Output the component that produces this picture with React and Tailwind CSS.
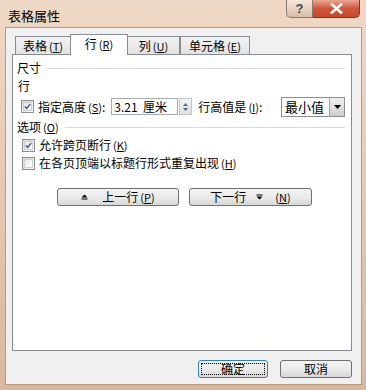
import React from 'react';

const cjk = { fontFamily: '"Noto Sans CJK SC", "Liberation Sans", sans-serif' };

const Key = ({ k }) => (
  <span className="ml-[2px] text-[11px]">
    (<span className="underline underline-offset-1">{k}</span>)
  </span>
);

const CheckBox = ({ checked }) => (
  <div className="w-[13px] h-[13px] border border-[#8e8f8f] bg-gradient-to-br from-[#dcdcdc] to-[#fbfbfb] p-[1px] flex items-center justify-center">
    <div className="w-full h-full border border-[#cfcfcf] bg-gradient-to-br from-[#e8e8e8] to-white flex items-center justify-center">
      {checked && (
        <svg width="9" height="9" viewBox="0 0 9 9">
          <path d="M1 4.5 L3.5 7 L8 1.5" stroke="#3a4f8f" strokeWidth="1.8" fill="none" />
        </svg>
      )}
    </div>
  </div>
);

const Tab = ({ label, k, active, w }) => (
  <div
    className={
      active
        ? 'relative z-10 -mb-px h-[21px] bg-white border border-b-0 border-[#898c95] flex items-center justify-center -mx-px'
        : 'h-[18px] bg-gradient-to-b from-[#f3f3f3] to-[#e2e2e2] border border-b-0 border-[#898c95] flex items-center justify-center'
    }
    style={{ width: w }}
  >
    <span className={active ? 'text-[12px] text-black pb-[2px]' : 'text-[12px] text-black'}>
      {label}
      <Key k={k} />
    </span>
  </div>
);

const Btn = ({ children, w, primary }) => (
  <div
    className={
      'h-[18px] rounded-[3px] border bg-gradient-to-b from-[#f2f2f2] via-[#ebebeb] to-[#d8d8d8] flex items-center justify-center p-[2px] ' +
      (primary ? 'border-[#3c7fb1]' : 'border-[#707070]')
    }
    style={{ width: w }}
  >
    <div
      className={
        'w-full h-full flex items-center justify-center text-[12px] ' +
        (primary ? 'border border-dotted border-black' : '')
      }
    >
      {children}
    </div>
  </div>
);

const UpMark = () => (
  <svg width="7" height="6" viewBox="0 0 7 6" className="mr-[14px]">
    <path d="M0.5 3.5 L3.5 0.5 L6.5 3.5Z" fill="#000" />
    <rect x="0.5" y="4.5" width="6" height="1" fill="#000" />
  </svg>
);

const DownMark = () => (
  <svg width="7" height="6" viewBox="0 0 7 6" className="mx-[10px]">
    <rect x="0.5" y="0.5" width="6" height="1" fill="#000" />
    <path d="M0.5 2.5 L3.5 5.5 L6.5 2.5Z" fill="#000" />
  </svg>
);

export default function App() {
  return (
    <div
      className="w-[366px] h-[390px] flex flex-col bg-gradient-to-b from-[#f0d8c6] via-[#e6c8b0] to-[#d9b99e] text-black"
      style={cjk}
    >
      {/* title bar */}
      <div className="h-[27px] flex items-start pl-[8px] pr-[6px]">
        <div className="pt-[6px] text-[13px] text-black">表格属性</div>
        <div className="ml-auto flex">
          <div className="w-[27px] h-[18px] rounded-bl-[5px] border border-t-0 border-[#8a7a6e] bg-gradient-to-b from-[#f6e6da] via-[#e9d3c3] to-[#d6bba6] flex items-center justify-center text-[13px] text-[#4a4a4a] font-bold" style={{ fontFamily: '"Liberation Sans", sans-serif' }}>
            ?
          </div>
          <div className="w-[47px] h-[18px] rounded-br-[5px] border border-t-0 border-l-0 border-[#7a3a2a] bg-gradient-to-b from-[#e9a592] via-[#d0553c] to-[#c24a2c] flex items-center justify-center">
            <svg width="13" height="11" viewBox="0 0 13 11">
              <path d="M2 1.5 L11 9.5 M11 1.5 L2 9.5" stroke="#fff" strokeWidth="2.6" strokeLinecap="square" />
            </svg>
          </div>
        </div>
      </div>

      {/* client area */}
      <div className="flex-1 mx-[5px] mb-[5px] mr-[4px] bg-[#f0f0f0] border border-[#b79c85] flex flex-col pl-[6px] pr-[9px] pt-[6px]">
        {/* tabs */}
        <div className="flex items-end pl-[3px]">
          <Tab label="表格" k="T" w={56} />
          <Tab label="行" k="R" active w={58} />
          <Tab label="列" k="U" w={53} />
          <Tab label="单元格" k="E" w={70} />
        </div>

        {/* panel */}
        <div className="h-[297px] bg-white border border-[#898c95] flex flex-col pl-[4px] pr-[6px] pt-[5px] text-[12px]">
          <div className="h-[16px] flex items-center gap-[6px]">
            <span>尺寸</span>
            <div className="flex-1 h-px bg-[#dcdcdc]" />
          </div>
          <div className="h-[16px] mt-[2px] flex items-center pl-[1px]">行</div>

          <div className="h-[21px] mt-[2px] flex items-center pl-[4px]">
            <CheckBox checked />
            <span className="ml-[4px]">
              指定高度<Key k="S" />:
            </span>
            <div className="ml-[6px] flex items-center">
              <div className="w-[67px] h-[17px] border border-[#a5acb5] flex items-center pl-[2px] text-[12px] whitespace-pre">
                3.21  厘米
              </div>
              <div className="w-[13px] h-[17px] ml-px border border-[#c2c7cd] bg-gradient-to-b from-[#f5f5f5] to-[#dedede] flex flex-col items-center justify-center gap-[2px]">
                <svg width="5" height="3" viewBox="0 0 5 3"><path d="M0 3 L2.5 0 L5 3Z" fill="#4f6c8f" /></svg>
                <svg width="5" height="3" viewBox="0 0 5 3"><path d="M0 0 L2.5 3 L5 0Z" fill="#4f6c8f" /></svg>
              </div>
            </div>
            <span className="ml-[6px]">
              行高值是<Key k="I" />:
            </span>
            <div className="ml-auto w-[64px] h-[20px] border border-[#8f8f8f] flex items-center">
              <span className="pl-[3px] flex-1 text-[13px]">最小值</span>
              <div className="w-[15px] h-[18px] border-l border-[#a0a0a0] bg-gradient-to-b from-[#f0f0f0] to-[#cfcfcf] flex items-center justify-center">
                <svg width="7" height="4" viewBox="0 0 7 4"><path d="M0 0 L7 0 L3.5 4Z" fill="#000" /></svg>
              </div>
            </div>
          </div>

          <div className="h-[16px] mt-[2px] flex items-center gap-[6px]">
            <span>
              选项<Key k="O" />
            </span>
            <div className="flex-1 h-px bg-[#dcdcdc]" />
          </div>

          <div className="h-[16px] mt-[2px] flex items-center pl-[5px]">
            <CheckBox checked />
            <span className="ml-[4px]">
              允许跨页断行<Key k="K" />
            </span>
          </div>
          <div className="h-[16px] mt-[2px] flex items-center pl-[5px]">
            <CheckBox />
            <span className="ml-[4px]">
              在各页顶端以标题行形式重复出现<Key k="H" />
            </span>
          </div>

          <div className="mt-[17px] flex pl-[40px] gap-[10px]">
            <Btn w={122}>
              <UpMark />上一行<Key k="P" />
            </Btn>
            <Btn w={123}>
              下一行<DownMark />
              <Key k="N" />
            </Btn>
          </div>
        </div>

        {/* bottom buttons */}
        <div className="mt-[9px] flex justify-end gap-[12px]">
          <Btn w={70} primary>确定</Btn>
          <Btn w={72}>取消</Btn>
        </div>
      </div>
    </div>
  );
}
